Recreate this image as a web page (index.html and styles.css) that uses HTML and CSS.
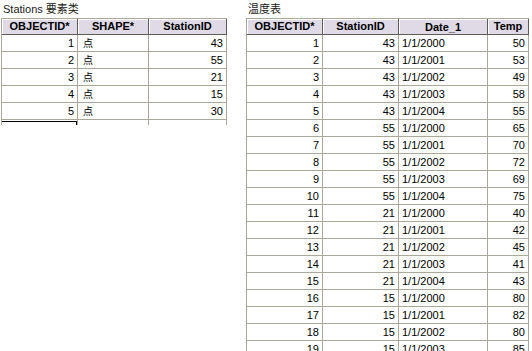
FILE: index.html
```html
<!DOCTYPE html>
<html>
<head>
<meta charset="utf-8">
<link rel="stylesheet" href="styles.css">
</head>
<body>
<div class="page">
  <section class="panel panel-left">
    <div class="title">Stations 要素类</div>
    <div class="grid grid-stations clip-left">
      <div class="hd">OBJECTID*</div><div class="hd">SHAPE*</div><div class="hd">StationID</div>
      <div class="c num">1</div><div class="c shp">点</div><div class="c num">43</div>
      <div class="c num">2</div><div class="c shp">点</div><div class="c num">55</div>
      <div class="c num">3</div><div class="c shp">点</div><div class="c num">21</div>
      <div class="c num">4</div><div class="c shp">点</div><div class="c num">15</div>
      <div class="c num">5</div><div class="c shp">点</div><div class="c num">30</div>
      <div class="c focus"><div class="focus-box"></div></div><div class="c"></div><div class="c"></div>
    </div>
  </section>
  <section class="panel panel-right">
    <div class="title">温度表</div>
    <div class="grid grid-temp">
      <div class="hd">OBJECTID*</div><div class="hd">StationID</div><div class="hd hd-low">Date_1</div><div class="hd">Temp</div>
      <div class="c num">1</div><div class="c num">43</div><div class="c txt">1/1/2000</div><div class="c num">50</div>
      <div class="c num">2</div><div class="c num">43</div><div class="c txt">1/1/2001</div><div class="c num">53</div>
      <div class="c num">3</div><div class="c num">43</div><div class="c txt">1/1/2002</div><div class="c num">49</div>
      <div class="c num">4</div><div class="c num">43</div><div class="c txt">1/1/2003</div><div class="c num">58</div>
      <div class="c num">5</div><div class="c num">43</div><div class="c txt">1/1/2004</div><div class="c num">55</div>
      <div class="c num">6</div><div class="c num">55</div><div class="c txt">1/1/2000</div><div class="c num">65</div>
      <div class="c num">7</div><div class="c num">55</div><div class="c txt">1/1/2001</div><div class="c num">70</div>
      <div class="c num">8</div><div class="c num">55</div><div class="c txt">1/1/2002</div><div class="c num">72</div>
      <div class="c num">9</div><div class="c num">55</div><div class="c txt">1/1/2003</div><div class="c num">69</div>
      <div class="c num">10</div><div class="c num">55</div><div class="c txt">1/1/2004</div><div class="c num">75</div>
      <div class="c num">11</div><div class="c num">21</div><div class="c txt">1/1/2000</div><div class="c num">40</div>
      <div class="c num">12</div><div class="c num">21</div><div class="c txt">1/1/2001</div><div class="c num">42</div>
      <div class="c num">13</div><div class="c num">21</div><div class="c txt">1/1/2002</div><div class="c num">45</div>
      <div class="c num">14</div><div class="c num">21</div><div class="c txt">1/1/2003</div><div class="c num">41</div>
      <div class="c num">15</div><div class="c num">21</div><div class="c txt">1/1/2004</div><div class="c num">43</div>
      <div class="c num">16</div><div class="c num">15</div><div class="c txt">1/1/2000</div><div class="c num">80</div>
      <div class="c num">17</div><div class="c num">15</div><div class="c txt">1/1/2001</div><div class="c num">82</div>
      <div class="c num">18</div><div class="c num">15</div><div class="c txt">1/1/2002</div><div class="c num">80</div>
      <div class="c num">19</div><div class="c num">15</div><div class="c txt">1/1/2003</div><div class="c num">85</div>
    </div>
  </section>
</div>
</body>
</html>
```
FILE: styles.css
```css
html, body {
  margin: 0;
  padding: 0;
  background: #fff;
  overflow: hidden;
}
body {
  width: 532px;
  height: 351px;
  font-family: "Liberation Sans", "Noto Sans CJK SC", sans-serif;
  font-size: 11px;
  color: #000;
}
.page {
  display: flex;
  align-items: flex-start;
  height: 351px;
  overflow: hidden;
}
.panel-left {
  width: 246px;
  flex: none;
}
.panel-right {
  flex: none;
}
.title {
  height: 18px;
  line-height: 14px;
  padding-top: 2px;
  box-sizing: border-box;
  color: #1a1a1a;
  font-family: "Liberation Sans", "Noto Sans CJK SC", sans-serif;
  white-space: nowrap;
}
.panel-left .title { padding-left: 3px; }
.panel-right .title { padding-left: 2px; }

.grid {
  display: grid;
  grid-auto-rows: 17px;
  grid-template-rows: 16px;
  border-top: 1px solid #ACA899;
  border-left: 1px solid #ACA899;
}
.grid-stations {
  margin-left: 1px;
  width: max-content;
  grid-template-columns: 76px 71px 78px;
}
.clip-left {
  height: 106px;
  overflow: hidden;
}
.grid-temp {
  width: max-content;
  grid-template-columns: 76px 76px 89px 41px;
}
.hd {
  box-sizing: border-box;
  background: #DFDAE6;
  border-right: 1px solid #5e5c55;
  border-bottom: 1px solid #5e5c55;
  box-shadow: inset 1px 1px 0 #fff;
  font-weight: bold;
  text-align: center;
  line-height: 15px;
  white-space: nowrap;
  overflow: hidden;
}
.hd-low { line-height: 17px; }
.c {
  box-sizing: border-box;
  border-right: 1px solid #ACA899;
  border-bottom: 1px solid #ACA899;
  line-height: 16px;
  white-space: nowrap;
  overflow: hidden;
}
.num {
  text-align: right;
  padding-right: 3px;
}
.txt {
  padding-left: 3px;
}
.shp {
  padding-left: 5px;
  font-family: "Noto Sans CJK SC", sans-serif;
  font-size: 10px;
}
.focus {
  padding-top: 1px;
}
.focus-box {
  height: 14px;
  border: 1px solid #000;
  border-bottom: none;
  margin-left: -1px;
}
```
